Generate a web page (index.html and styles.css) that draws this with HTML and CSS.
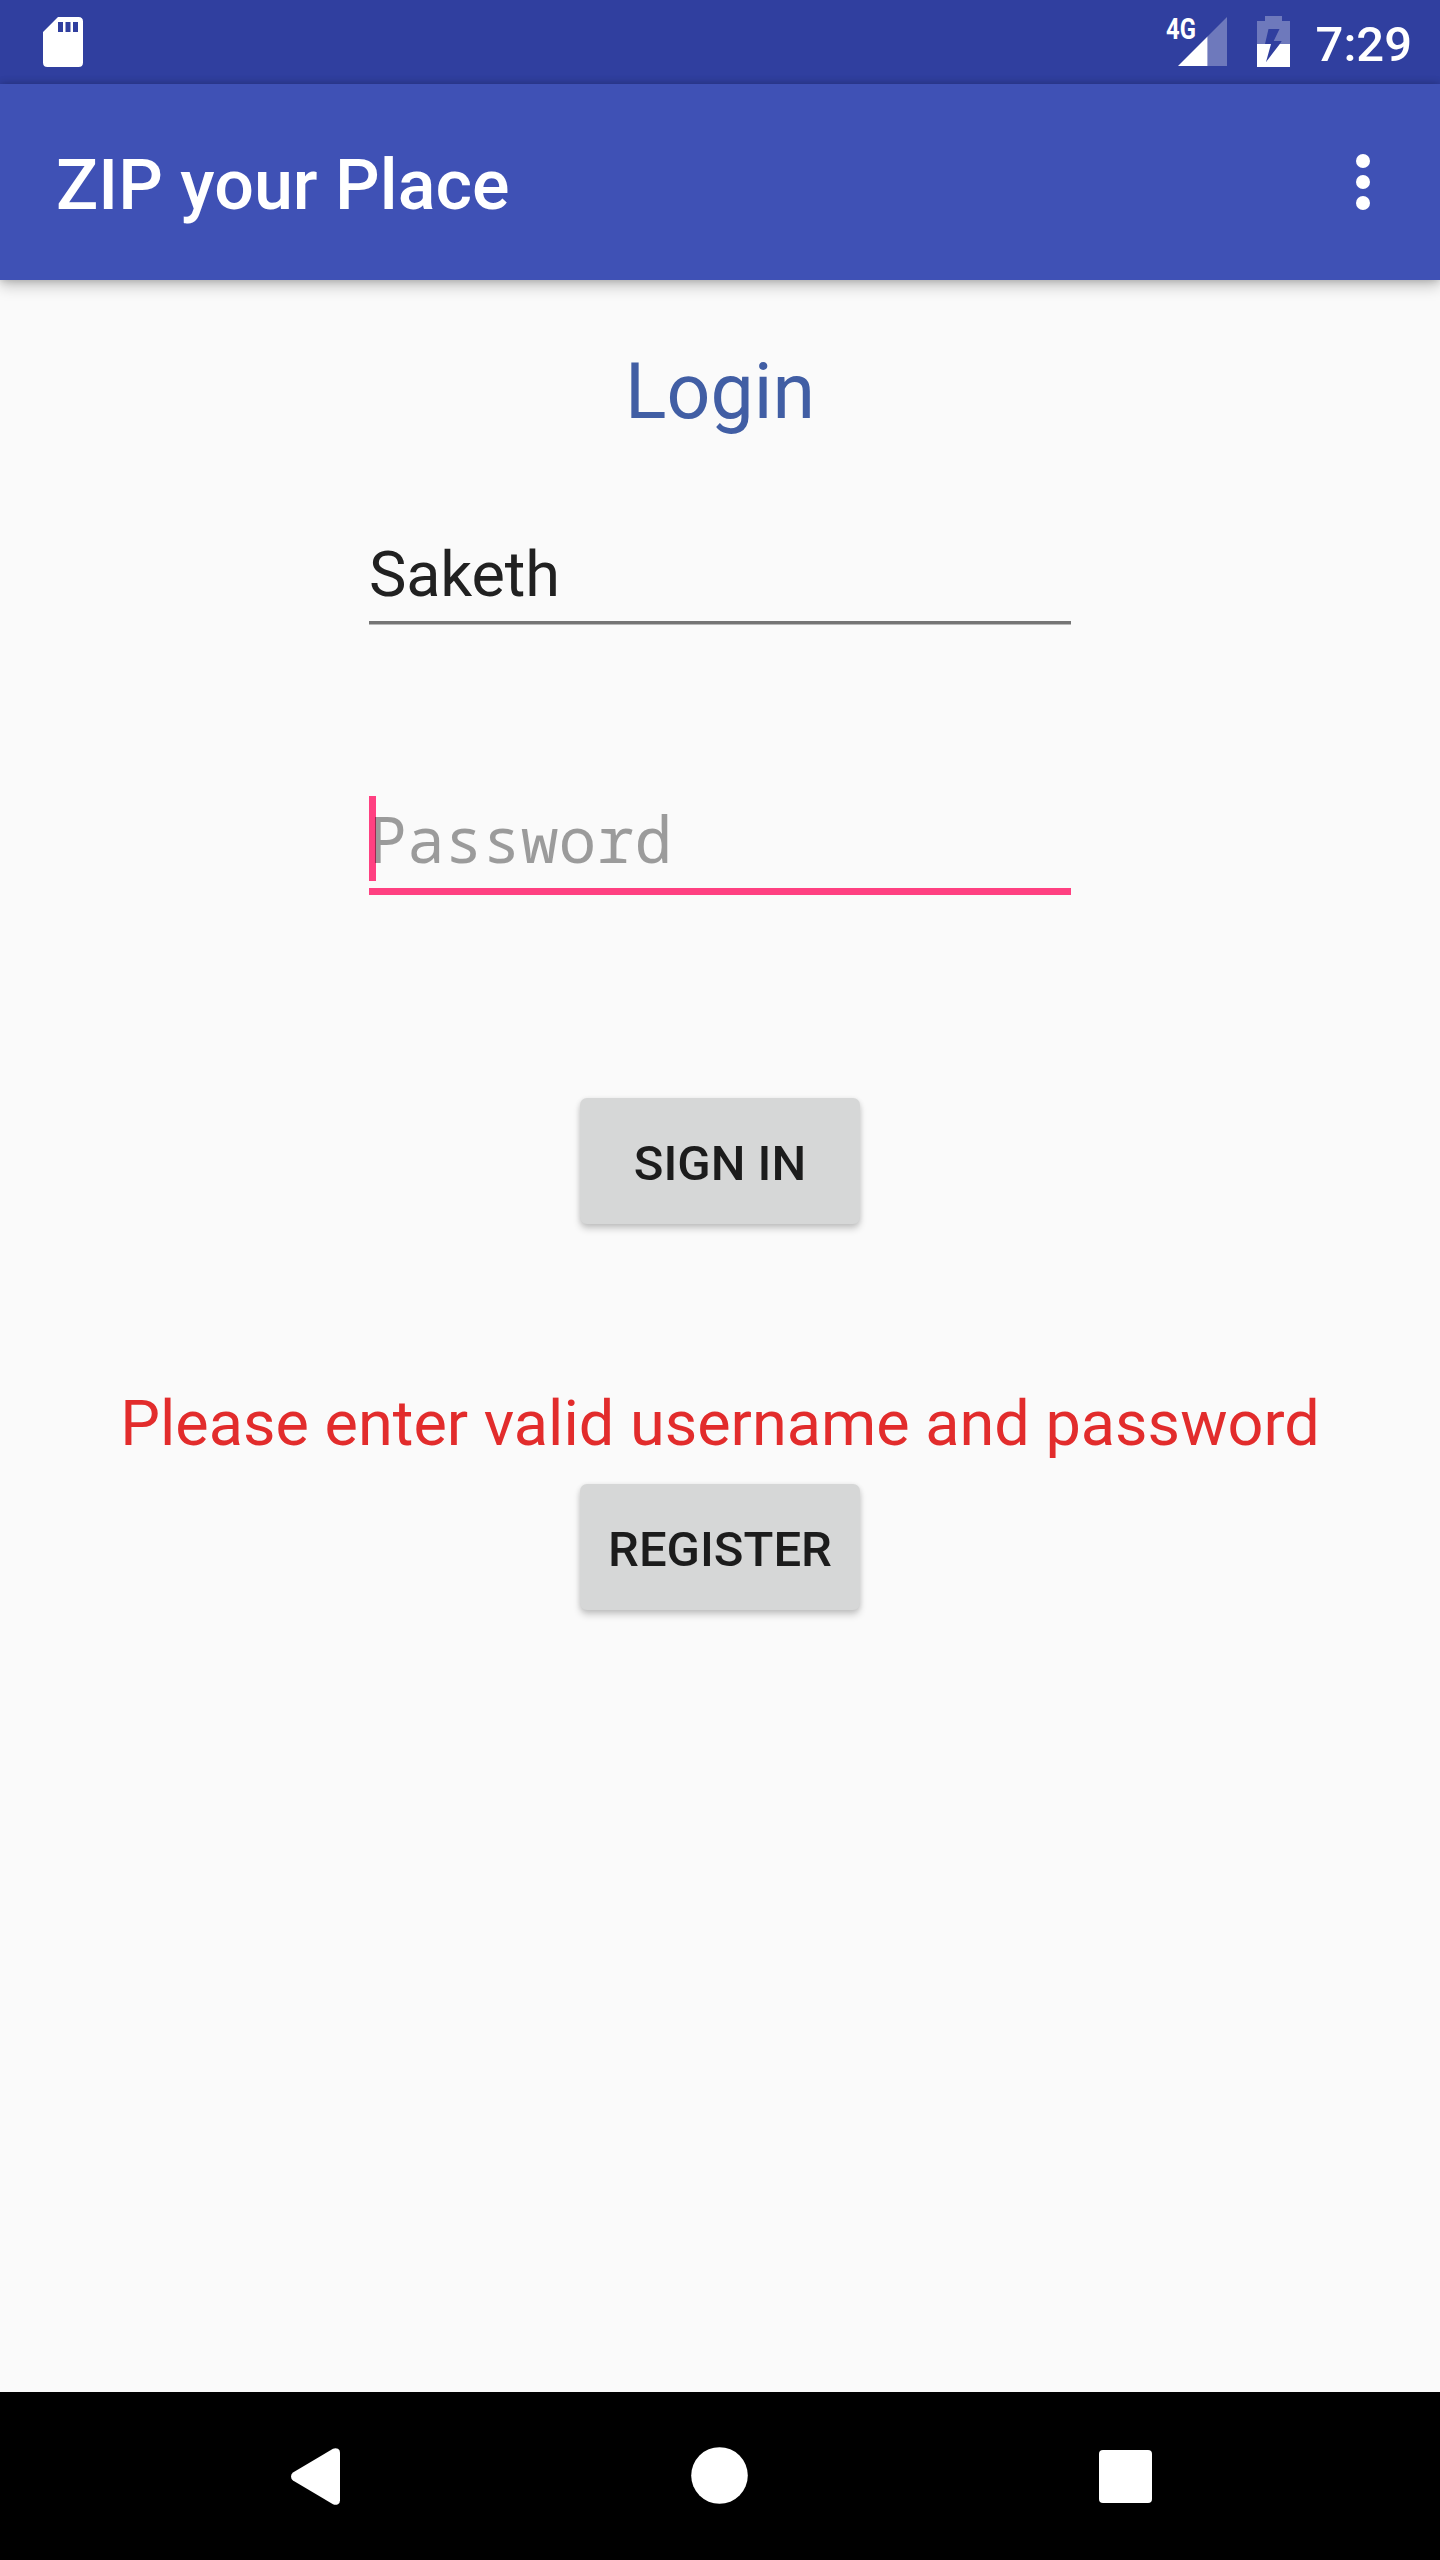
FILE: index.html
```html
<!DOCTYPE html>
<html lang="en">
<head>
<meta charset="utf-8">
<title>ZIP your Place</title>
<link rel="stylesheet" href="styles.css">
</head>
<body>
<div class="screen">
  <header class="status-bar">
    <svg class="sd-card" width="40" height="50" viewBox="0 0 40 50"><path fill="#fff" fill-rule="evenodd" d="M15 0H35.500Q40 0 40 4.500V45.500Q40 50 35.500 50H4.500Q0 50 0 45.500V15ZM15 5V15H20V5ZM22.500 5V15H27.500V5ZM30 5V15H35V5Z"/></svg>
    <div class="status-icons">
      <span class="network">4G</span>
      <svg class="signal" width="50" height="50" viewBox="0 0 50 50"><path fill="#fff" fill-opacity=".3" d="M49 0V49H29.500V19.500Z"/><path fill="#fff" d="M29.500 19.500V49H0Z"/></svg>
      <svg class="battery" width="33" height="51" viewBox="0 0 33 51"><path fill="#fff" fill-opacity=".3" fill-rule="evenodd" d="M8 0H25V5H33V28H22.800L24.700 25H16.700L22.500 13H11.500L8 28H0V5H8Z"/><path fill="#fff" d="M0 28H14L9 46L22.800 28H33V51H0Z"/></svg>
      <span class="clock">7:29</span>
    </div>
  </header>
  <div class="app-bar">
    <h1 class="title">ZIP your Place</h1>
    <svg class="overflow" width="14" height="56" viewBox="0 0 14 56" fill="#fff"><circle cx="7" cy="7" r="7"/><circle cx="7" cy="28" r="7"/><circle cx="7" cy="49" r="7"/></svg>
  </div>
  <main class="content">
    <h2 class="heading">Login</h2>
    <div class="field username">Saketh</div>
    <div class="field password"><span class="hint">Password</span></div>
    <button class="button sign-in">SIGN IN</button>
    <p class="error">Please enter valid username and password</p>
    <button class="button register">REGISTER</button>
  </main>
  <nav class="nav-bar">
    <svg class="back" width="49" height="57" viewBox="0 0 49 57"><path fill="#fff" d="M42 .8Q44.500-.4 47 .8Q49 2 49 4.500V52.500Q49 55 47 56.200Q44.500 57.400 42 56.200L2 32.500Q0 31 0 28.500Q0 26 2 24.500Z"/></svg>
    <svg class="home" width="57" height="57" viewBox="0 0 57 57"><circle cx="28.500" cy="28.500" r="28.300" fill="#fff"/></svg>
    <svg class="recents" width="53" height="53" viewBox="0 0 53 53"><rect width="53" height="53" rx="4" fill="#fff"/></svg>
  </nav>
</div>
</body>
</html>
```
FILE: styles.css
```css
* { box-sizing: border-box; }

body {
  margin: 0;
  font-family: Roboto, sans-serif;
}

h1, h2, p { margin: 0; font-weight: 400; }

.screen {
  display: flex;
  flex-direction: column;
  width: 1440px;
  height: 2560px;
  overflow: hidden;
  background: #fafafa;
}

.status-bar {
  display: flex;
  justify-content: space-between;
  flex: none;
  height: 84px;
  padding: 16px 28px 0 43px;
  background: #303f9f;
  color: #fff;
}

.sd-card { margin-top: 1px; }

.status-icons { display: flex; }

.network {
  width: 12px;
  font-size: 29px;
  font-weight: 700;
  line-height: 26px;
  white-space: nowrap;
  transform: scaleX(.82);
  transform-origin: 0 0;
}

.signal { margin: 1px 29px 0 0; }

.battery { margin-right: 26px; }

.clock {
  font-size: 49px;
  font-weight: 500;
  line-height: 57px;
}

.app-bar {
  position: relative;
  display: flex;
  align-items: center;
  justify-content: space-between;
  flex: none;
  height: 196px;
  padding: 0 70px 0 56px;
  background: #3f51b5;
  color: #fff;
  box-shadow: 0 6px 14px rgba(0, 0, 0, .22), 0 0 8px rgba(0, 0, 0, .2);
}

.title {
  padding-top: 6px;
  font-size: 70px;
  font-weight: 500;
  letter-spacing: .05px;
}

.content {
  display: flex;
  flex: 1;
  flex-direction: column;
  align-items: center;
  padding-top: 61px;
}

.heading {
  height: 102px;
  color: #415ea4;
  font-size: 77px;
  line-height: 102px;
}

.field {
  width: 702px;
  font-size: 63px;
  line-height: 84px;
}

.username {
  height: 92px;
  margin-top: 90px;
  background: linear-gradient(#757575 3px, #b8b8b8 3px) 0 100% / 100% 4px no-repeat;
  color: #212121;
  letter-spacing: -.15px;
}

.password {
  height: 99px;
  margin-top: 171px;
  border-bottom: 7px solid #ff4081;
  background: linear-gradient(#ff4081, #ff4081) 0 0 / 7px 85px no-repeat;
  line-height: 86px;
}

.hint {
  color: rgba(0, 0, 0, .38);
  font-family: "Noto Sans Mono", "DejaVu Sans Mono", monospace;
  letter-spacing: .12px;
}

.button {
  flex: none;
  width: 280px;
  height: 126px;
  padding: 5px 0 0;
  border: 0;
  border-radius: 7px;
  background: #d6d7d7;
  box-shadow: 0 5px 7px rgba(0, 0, 0, .18), 0 1px 5px rgba(0, 0, 0, .1);
  color: #1c1c1c;
  font: 500 49px/58px Roboto, sans-serif;
}

.sign-in { margin-top: 203px; }

.error {
  height: 84px;
  margin-top: 158px;
  color: #e22c2c;
  font-size: 63px;
  line-height: 84px;
  white-space: nowrap;
}

.register { margin-top: 18px; }

.nav-bar {
  display: flex;
  flex: none;
  height: 168px;
  padding: 55px 288px 0 291px;
  justify-content: space-between;
  background: #000;
}

.back { margin-top: 1px; }
.recents { margin-top: 3px; }
```
